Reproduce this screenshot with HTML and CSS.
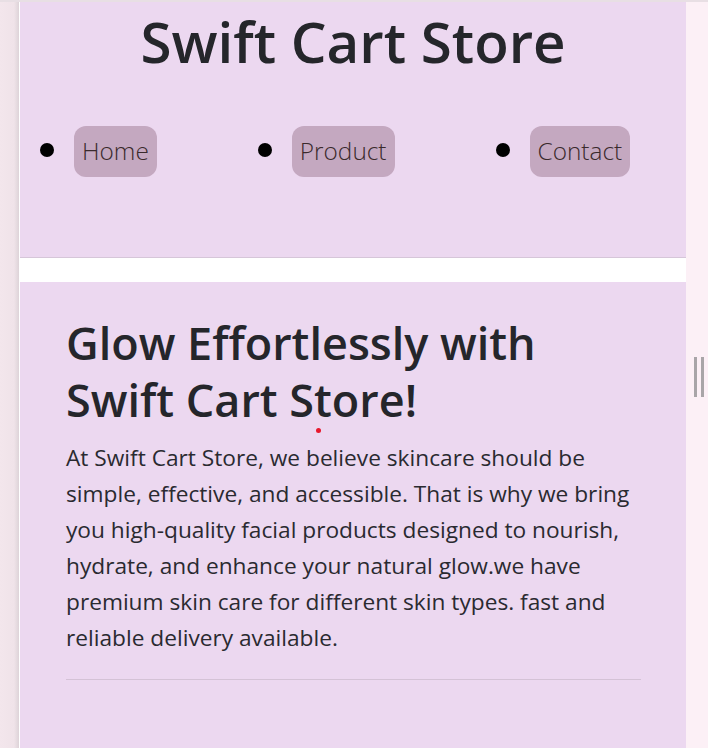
FILE: index.html
```html
<!DOCTYPE html>
<html lang="en">
<head>
<meta charset="utf-8">
<title>Swift Cart Store</title>
<link rel="stylesheet" href="styles.css">
</head>
<body>
<div class="frame">
  <div class="gutter-left"></div>
  <div class="page">
    <header class="site-header">
      <h1 class="site-title">Swift Cart Store</h1>
      <nav class="site-nav">
        <ul class="nav-list">
          <li class="nav-item"><a class="nav-link" href="#">Home</a></li>
          <li class="nav-item"><a class="nav-link" href="#">Product</a></li>
          <li class="nav-item"><a class="nav-link" href="#">Contact</a></li>
        </ul>
      </nav>
    </header>
    <main class="hero">
      <h2 class="hero-title">Glow Effortlessly with Swift Cart Store!</h2>
      <p class="hero-text">At Swift Cart Store, we believe skincare should be simple, effective, and accessible. That is why we bring you high-quality facial products designed to nourish, hydrate, and enhance your natural glow.we have premium skin care for different skin types. fast and reliable delivery available.</p>
      <hr class="divider">
      <span class="cursor-dot"></span>
    </main>
  </div>
  <div class="gutter-right"><span class="scroll-grip"></span></div>
</div>
</body>
</html>
```
FILE: styles.css
```css
* { box-sizing: border-box; }
html, body { margin: 0; padding: 0; height: 100%; }
body {
  font-family: "Open Sans", "Noto Sans", "DejaVu Sans", sans-serif;
  color: #212529;
  background: #fcf0f6;
  overflow: hidden;
}
.frame {
  display: flex;
  min-height: 748px;
  border-top: 2px solid #e8dfe4;
}
.gutter-left {
  width: 20px;
  flex: none;
  background: linear-gradient(to right, #f3e6ec 0, #f0e3e9 14px, #ddd3d8 19px, #ffffff 19px, #ffffff 20px);
}
.page {
  width: 666px;
  flex: none;
  display: flex;
  flex-direction: column;
  background: #ffffff;
}
.gutter-right {
  flex: 1;
  position: relative;
  background: #fcf0f6;
}
.scroll-grip {
  position: absolute;
  left: 8px;
  top: 355px;
  width: 10px;
  height: 40px;
  border-left: 3px solid #a9a5a8;
  border-right: 3px solid #a9a5a8;
}
.site-header {
  background: #ecd8f0;
  height: 256px;
  border-bottom: 1px solid #d6c6d9;
}
.site-title {
  margin: 0;
  text-align: center;
  font-size: 56.5px;
  font-weight: 600;
  line-height: 80px;
  color: #25262b;
}
.nav-list {
  display: flex;
  margin: 44px 0 0;
  padding: 0 0 0 54px;
  font-size: 38px;
  color: #000000;
}
.nav-item {
  line-height: 44px;
}
.nav-item + .nav-item {
  margin-left: 135px;
}
.nav-link {
  display: inline-block;
  padding: 7px 8px 9px;
  font-size: 24.4px;
  font-weight: 300;
  line-height: 35px;
  color: #3a2a2c;
  text-decoration: none;
  background: #c4a8c0;
  border-radius: 12px;
  vertical-align: top;
}
.hero {
  position: relative;
  flex: 1;
  margin-top: 24px;
  background: #ecd8f0;
  padding: 32px 45px 60px 46px;
}
.hero-title {
  margin: 0 0 12px;
  font-size: 45px;
  font-weight: 600;
  line-height: 57px;
  color: #25262b;
}
.hero-text {
  margin: 0 0 23px;
  font-size: 22.7px;
  line-height: 36px;
  color: #2a2a30;
}
.divider {
  margin: 0;
  border: 0;
  border-top: 1px solid #d4c2d6;
}
.cursor-dot {
  position: absolute;
  left: 296px;
  top: 146px;
  width: 5px;
  height: 5px;
  border-radius: 50%;
  background: #e8182c;
}
```
